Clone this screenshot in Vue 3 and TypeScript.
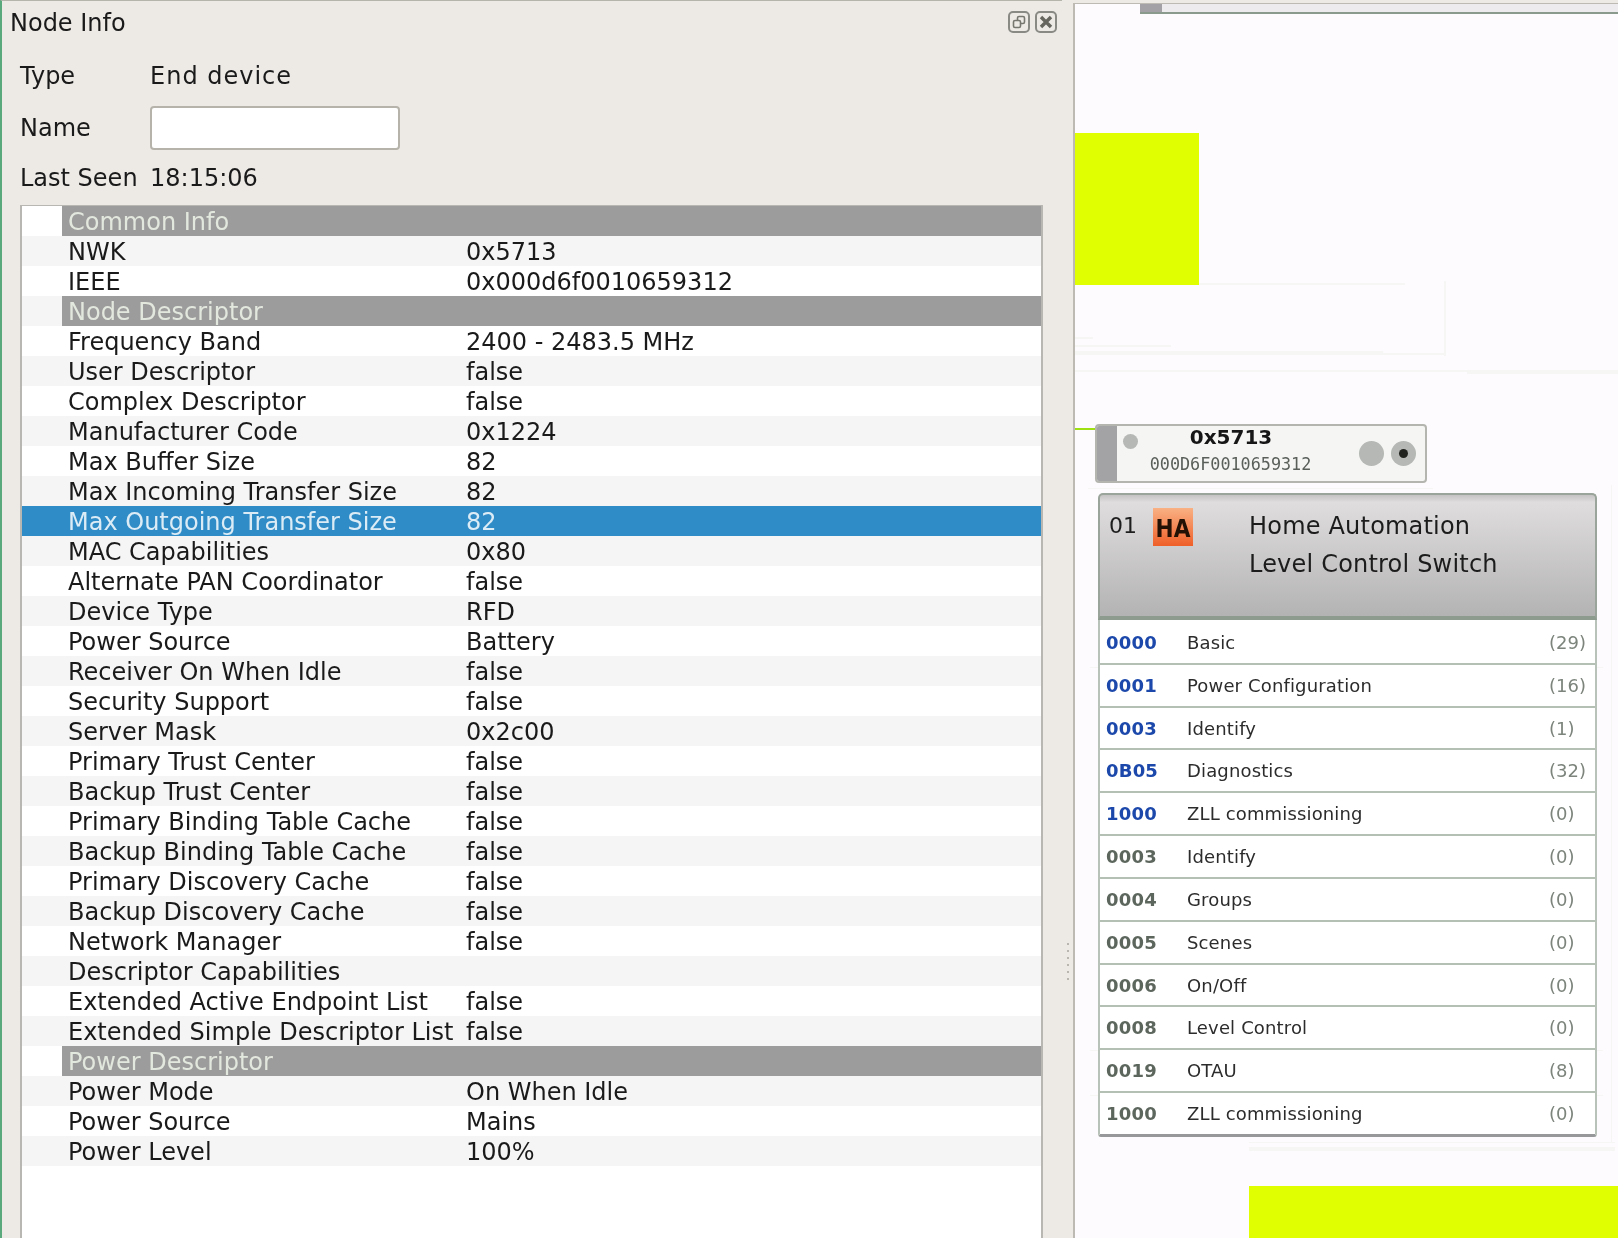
<script setup lang="ts">
interface Row { name: string; value?: string; head?: boolean; selected?: boolean }
const rows: Row[] = [
  { name: 'Common Info', head: true },
  { name: 'NWK', value: '0x5713' },
  { name: 'IEEE', value: '0x000d6f0010659312' },
  { name: 'Node Descriptor', head: true },
  { name: 'Frequency Band', value: '2400 - 2483.5 MHz' },
  { name: 'User Descriptor', value: 'false' },
  { name: 'Complex Descriptor', value: 'false' },
  { name: 'Manufacturer Code', value: '0x1224' },
  { name: 'Max Buffer Size', value: '82' },
  { name: 'Max Incoming Transfer Size', value: '82' },
  { name: 'Max Outgoing Transfer Size', value: '82', selected: true },
  { name: 'MAC Capabilities', value: '0x80' },
  { name: 'Alternate PAN Coordinator', value: 'false' },
  { name: 'Device Type', value: 'RFD' },
  { name: 'Power Source', value: 'Battery' },
  { name: 'Receiver On When Idle', value: 'false' },
  { name: 'Security Support', value: 'false' },
  { name: 'Server Mask', value: '0x2c00' },
  { name: 'Primary Trust Center', value: 'false' },
  { name: 'Backup Trust Center', value: 'false' },
  { name: 'Primary Binding Table Cache', value: 'false' },
  { name: 'Backup Binding Table Cache', value: 'false' },
  { name: 'Primary Discovery Cache', value: 'false' },
  { name: 'Backup Discovery Cache', value: 'false' },
  { name: 'Network Manager', value: 'false' },
  { name: 'Descriptor Capabilities', value: '' },
  { name: 'Extended Active Endpoint List', value: 'false' },
  { name: 'Extended Simple Descriptor List', value: 'false' },
  { name: 'Power Descriptor', head: true },
  { name: 'Power Mode', value: 'On When Idle' },
  { name: 'Power Source', value: 'Mains' },
  { name: 'Power Level', value: '100%' },
]
const clusters = [
  { id: '0000', name: 'Basic', count: '(29)', server: true },
  { id: '0001', name: 'Power Configuration', count: '(16)', server: true },
  { id: '0003', name: 'Identify', count: '(1)', server: true },
  { id: '0B05', name: 'Diagnostics', count: '(32)', server: true },
  { id: '1000', name: 'ZLL commissioning', count: '(0)', server: true },
  { id: '0003', name: 'Identify', count: '(0)', server: false },
  { id: '0004', name: 'Groups', count: '(0)', server: false },
  { id: '0005', name: 'Scenes', count: '(0)', server: false },
  { id: '0006', name: 'On/Off', count: '(0)', server: false },
  { id: '0008', name: 'Level Control', count: '(0)', server: false },
  { id: '0019', name: 'OTAU', count: '(8)', server: false },
  { id: '1000', name: 'ZLL commissioning', count: '(0)', server: false },
]
const faint = [
  { l: 1199, t: 283, w: 206, h: 2 },
  { l: 1444, t: 281, w: 2, h: 75 },
  { l: 1075, t: 337, w: 18, h: 2 },
  { l: 1075, t: 345, w: 96, h: 2 },
  { l: 1075, t: 351, w: 308, h: 2 },
  { l: 1075, t: 353, w: 371, h: 2 },
  { l: 1075, t: 370, w: 543, h: 2 },
  { l: 1467, t: 372, w: 151, h: 2 },
  { l: 1088, t: 488, w: 345, h: 1 },
  { l: 1611, t: 485, w: 1, h: 657 },
  { l: 1090, t: 667, w: 513, h: 1 },
  { l: 1090, t: 1050, w: 513, h: 1 },
  { l: 1090, t: 1095, w: 513, h: 1 },
  { l: 1249, t: 1142, w: 366, h: 1 },
  { l: 1249, t: 1147, w: 366, h: 4 },
]
</script>

<template>
  <div class="screen">
    <section class="panel">
      <header class="title">
        <span>Node Info</span>
        <div class="win-btns">
          <svg width="22" height="22" viewBox="0 0 22 22">
            <rect x="1" y="1" width="20" height="20" rx="4" fill="none" stroke="#8a8a84" stroke-width="2" />
            <rect x="9.5" y="5.5" width="7" height="7" rx="1.5" fill="none" stroke="#77776f" stroke-width="1.6" />
            <rect x="5.5" y="9.5" width="7" height="7" rx="1.5" fill="#edeae6" stroke="#77776f" stroke-width="1.6" />
          </svg>
          <svg width="22" height="22" viewBox="0 0 22 22">
            <rect x="1" y="1" width="20" height="20" rx="4" fill="none" stroke="#8a8a84" stroke-width="2" />
            <path d="M6 6 L16 16 M16 6 L6 16" stroke="#66665e" stroke-width="3.4" />
          </svg>
        </div>
      </header>
      <div class="form">
        <label>Type</label><span class="spaced">End device</span>
        <label>Name</label><div class="input"></div>
        <label>Last Seen</label><span>18:15:06</span>
      </div>
      <div class="table">
        <div
          v-for="(r, i) in rows"
          :key="i"
          class="row"
          :class="{ alt: i % 2 === 1, selected: r.selected }"
        >
          <div class="indent"></div>
          <div v-if="r.head" class="head-cell">{{ r.name }}</div>
          <template v-else>
            <div class="name">{{ r.name }}</div>
            <div class="value">{{ r.value }}</div>
          </template>
        </div>
      </div>
    </section>

    <div class="splitter"><i v-for="n in 6" :key="n"></i></div>

    <section class="canvas">
      <div class="scroll-track"><div class="scroll-handle"></div></div>
      <div class="yellow y1"></div>
      <div class="yellow y2"></div>
      <div
        v-for="(f, i) in faint"
        :key="i"
        class="faint"
        :style="{ left: f.l - 1075 + 'px', top: f.t - 4 + 'px', width: f.w + 'px', height: f.h + 'px' }"
      ></div>
      <div class="link"></div>

      <div class="node">
        <div class="node-strip"></div>
        <span class="dot d1"></span>
        <div class="node-text">
          <b>0x5713</b>
          <small>000D6F0010659312</small>
        </div>
        <span class="dot d2"></span>
        <span class="dot d3"><i></i></span>
      </div>

      <div class="endpoint">
        <div class="ep-head">
          <span class="ep-num">01</span>
          <span class="ha">HA</span>
          <div class="ep-title">
            <div>Home Automation</div>
            <div>Level Control Switch</div>
          </div>
        </div>
        <div class="ep-body">
          <div v-for="(c, i) in clusters" :key="i" class="cluster">
            <span class="cid" :class="{ server: c.server }">{{ c.id }}</span>
            <span class="cname">{{ c.name }}</span>
            <span class="ccount">{{ c.count }}</span>
          </div>
        </div>
      </div>
    </section>
  </div>
</template>

<style>
html, body { margin: 0; padding: 0; background: #edeae6; }
</style>

<style scoped>
.screen {
  display: flex;
  width: 1618px;
  height: 1238px;
  overflow: hidden;
  background: #edeae6;
  font-family: "DejaVu Sans", sans-serif;
  color: #1a1a1a;
  filter: blur(0.4px);
}
.panel {
  width: 1062px;
  flex: none;
  border-left: 2px solid #5aa97c;
  border-top: 1px solid #b5b5ab;
  box-sizing: border-box;
  display: flex;
  flex-direction: column;
}
.title {
  display: flex;
  justify-content: space-between;
  align-items: flex-start;
  height: 54px;
  padding-left: 8px;
  font-size: 24px;
  line-height: 44px;
  box-sizing: border-box;
}
.win-btns {
  display: flex;
  gap: 5px;
  margin-top: 10px;
  margin-right: 5px;
}
.form {
  display: grid;
  grid-template-columns: 130px 250px;
  grid-template-rows: 42px 62px 37px;
  align-items: center;
  align-content: start;
  padding-left: 18px;
  font-size: 24px;
  height: 150px;
}
.spaced { letter-spacing: 1px; }
.input {
  height: 44px;
  box-sizing: border-box;
  background: #fff;
  border: 2px solid #b5b3aa;
  border-radius: 4px;
}
.table {
  flex: 1;
  margin-left: 18px;
  margin-right: 19px;
  background: #fff;
  border: 2px solid #b9b7b2;
  border-top-width: 1px;
  border-bottom: none;
}
.row {
  display: flex;
  height: 30px;
  font-size: 24px;
  line-height: 32px;
  white-space: nowrap;
}
.row.alt { background: #f5f5f5; }
.row.selected { background: #308cc6; color: #dcecf6; }
.indent { width: 40px; flex: none; }
.head-cell {
  flex: 1;
  background: #9c9c9c;
  color: #e3e8de;
  padding-left: 6px;
  height: 30px;
}
.name { width: 398px; flex: none; padding-left: 6px; }
.value { flex: 1; }

.splitter {
  width: 11px;
  flex: none;
  display: flex;
  flex-direction: column;
  align-items: center;
  justify-content: flex-start;
  gap: 5px;
  padding-top: 943px;
  box-sizing: border-box;
}
.splitter i { width: 2px; height: 2px; background: #b9b6b0; display: block; flex: none; }

.canvas {
  position: relative;
  flex: 1;
  margin-top: 3px;
  background: #fefbfe;
  border-left: 2px solid #bdb9b3;
  border-top: 1px solid #bdb9b3;
  box-sizing: border-box;
}
.scroll-track {
  position: absolute;
  left: 65px;
  right: 0;
  top: 0;
  height: 8px;
  background: #eeebee;
  border-bottom: 2px solid #8a9a8c;
}
.scroll-handle { width: 22px; height: 8px; background: #a3a1a5; }
.yellow { position: absolute; background: #e0ff00; }
.y1 { left: 0; top: 129px; width: 124px; height: 152px; }
.y2 { left: 174px; top: 1182px; right: 0; height: 60px; }
.faint { position: absolute; background: #f6f6f5; }
.link { position: absolute; left: 0; top: 424px; width: 20px; height: 2px; background: #9ee011; }

.node {
  position: absolute;
  left: 20px;
  top: 420px;
  width: 332px;
  height: 59px;
  box-sizing: border-box;
  background: #f5f6f4;
  border: 2px solid #b3b5ae;
  border-radius: 4px;
  overflow: hidden;
}
.node-strip { position: absolute; left: 0; top: 0; bottom: 0; width: 20px; background: #a3a2a5; }
.dot { position: absolute; border-radius: 50%; background: #b5b8b4; display: block; }
.d1 { left: 26px; top: 8px; width: 15px; height: 15px; }
.d2 { left: 262px; top: 15px; width: 25px; height: 25px; }
.d3 { left: 294px; top: 15px; width: 25px; height: 25px; }
.d3 i { position: absolute; left: 8px; top: 8px; width: 9px; height: 9px; border-radius: 50%; background: #22241f; }
.node-text {
  position: absolute;
  left: 51px;
  top: -1px;
  width: 166px;
  display: flex;
  flex-direction: column;
  align-items: center;
}
.node-text b { font-size: 20px; line-height: 24px; color: #161616; }
.node-text small {
  font-family: "DejaVu Sans Mono", monospace;
  font-size: 16.8px;
  line-height: 30px;
  color: #5a5f5a;
  margin-left: -1px;
}

.endpoint {
  position: absolute;
  left: 23px;
  top: 489px;
  width: 499px;
  display: flex;
  flex-direction: column;
}
.ep-head {
  height: 127px;
  box-sizing: border-box;
  border: 2px solid #9aa49a;
  border-bottom: 4px solid #8d9a8e;
  border-radius: 5px 5px 0 0;
  background: linear-gradient(#c4c2c2 0, #dfdddd 6%, #b4b3b3 100%);
  display: flex;
  padding-left: 9px;
  position: relative;
}
.ep-num { font-size: 22px; line-height: 62px; color: #1e1e1e; }
.ha {
  position: absolute;
  left: 53px;
  top: 13px;
  width: 40px;
  height: 38px;
  background: linear-gradient(#f9b184, #ef5f28);
  color: #221104;
  font-weight: bold;
  font-size: 24px;
  font-stretch: condensed;
  text-align: center;
  line-height: 42px;
}
.ep-title {
  position: absolute;
  left: 149px;
  top: 12px;
  font-size: 24px;
  letter-spacing: 0.2px;
  line-height: 38px;
  color: #1c1c1c;
}
.ep-body {
  height: 517px;
  box-sizing: border-box;
  display: flex;
  flex-direction: column;
  background: #fff;
  padding-top: 2px;
  border-left: 2px solid #b9c2b9;
  border-right: 2px solid #b9c2b9;
  border-bottom: 3px solid #96989a;
  border-radius: 0 0 3px 3px;
}
.cluster {
  flex: 1;
  display: flex;
  align-items: center;
  border-bottom: 2px solid #b5c0b5;
  padding-left: 6px;
  font-size: 18px;
}
.cluster:last-child { border-bottom: none; }
.cid { width: 81px; flex: none; font-weight: bold; font-size: 18px; letter-spacing: 0.2px; color: #5d665d; }
.cid.server { color: #1b48aa; }
.cname { width: 362px; flex: none; color: #2c2c2c; letter-spacing: 0.15px; }
.ccount { color: #7c847c; }
</style>
